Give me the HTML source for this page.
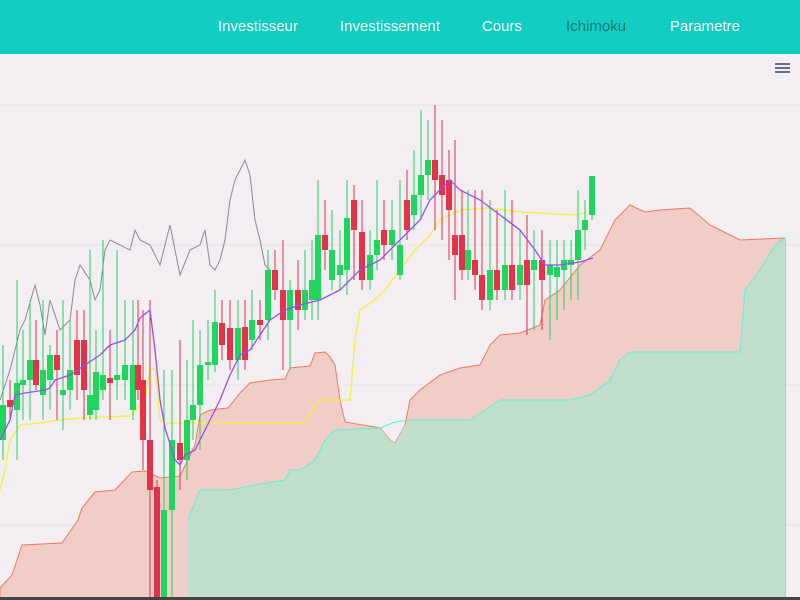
<!DOCTYPE html>
<html><head><meta charset="utf-8"><style>
*{margin:0;padding:0}
body{width:800px;height:600px;overflow:hidden;background:#f2eef2;font-family:"Liberation Sans",sans-serif;position:relative}
.nav{position:absolute;left:0;top:0;width:800px;height:54px;background:#14cdc2}
.nav span{position:absolute;top:18px;font-size:15px;color:#fff;white-space:nowrap;transform:translateX(-50%)}
.ham{position:absolute;left:775px;width:15px;height:2px;background:#6a6f88}
svg{position:absolute;left:0;top:54px}
</style></head><body>
<div class="nav">
<span style="left:258px">Investisseur</span>
<span style="left:390px">Investissement</span>
<span style="left:502px">Cours</span>
<span style="left:596px;color:#0e7a72">Ichimoku</span>
<span style="left:705px">Parametre</span>
</div>
<div class="ham" style="top:63px"></div><div class="ham" style="top:67px"></div><div class="ham" style="top:71px"></div>
<svg width="800" height="546" viewBox="0 54 800 546" id="c">
<g stroke="#e6e2e8" stroke-width="1">
<line x1="0" y1="105" x2="800" y2="105"/><line x1="0" y1="245" x2="800" y2="245"/><line x1="0" y1="385" x2="800" y2="385"/><line x1="0" y1="525" x2="800" y2="525"/>
</g>
<polygon fill="#f0cdc6" stroke="#ef7a5e" stroke-width="1" points="0,600 0,588 12,575 22,545 62,543 78,520 82,508 95,492 115,490 132,472 145,471 160,478 180,476 195,445 200,415 210,410 228,408 240,393 250,383 270,380 285,379 290,368 310,366 315,353 325,352 330,357 335,365 340,400 345,422 380,428 390,440 395,443 405,425 410,400 420,390 440,375 460,368 480,365 490,345 500,335 520,333 540,325 545,300 560,290 580,265 600,250 615,220 630,205 645,212 660,210 690,208 710,225 740,240 785,238 785,600"/>
<polygon fill="#bfdfcb" points="188,600 188,520 200,490 230,490 260,484 285,480 290,470 300,470 315,460 325,440 335,430 380,428 390,440 395,443 405,425 410,420 470,420 500,400 570,400 590,395 610,380 620,360 630,352 740,352 745,290 760,270 775,245 785,238 785,600"/>
<polyline fill="none" stroke="#5ff0d8" stroke-width="1" points="188,520 200,490 230,490 260,484 285,480 290,470 300,470 315,460 325,440 335,430 380,428 395,422 410,420 470,420 500,400 570,400 590,395 610,380 620,360 630,352 740,352 745,290 760,270 775,245 785,238"/>
<polyline fill="none" stroke="#8a8a98" stroke-width="1" points="0,400 10,370 20,330 25,320 35,285 40,305 45,335 50,300 60,330 70,320 75,280 80,265 90,280 95,300 100,290 105,250 110,240 120,245 130,250 135,230 140,240 150,245 160,265 170,225 175,250 180,275 190,250 200,245 205,230 210,265 215,270 220,260 225,240 230,200 235,180 240,170 245,160 250,175 255,220 260,240 265,265 270,270"/>
<polyline fill="none" stroke="#f5f03a" stroke-width="1.3" points="0,490 5,470 10,440 20,425 40,423 60,420 80,418 130,416 145,400 150,370 155,368 160,420 165,423 305,423 315,405 320,400 350,400 355,340 360,310 375,300 385,290 400,270 415,250 430,235 440,220 450,215 460,210 490,208 520,212 575,215 585,213"/>
<g id="cd"></g>
<polyline fill="none" stroke="#9a4cf0" stroke-width="1.3" points="0,440 10,420 15,395 25,393 45,390 50,388 55,380 70,375 100,355 110,345 125,340 135,330 140,318 150,310 155,350 160,400 165,428 175,460 180,465 185,455 195,450 200,440 210,420 220,400 230,375 240,355 250,350 260,335 270,320 285,310 300,305 320,300 340,290 360,270 380,260 400,240 420,220 430,200 440,190 450,180 460,190 480,200 500,215 520,230 535,250 545,265 560,265 580,262 593,258"/>
<rect x="0" y="597" width="800" height="3" fill="#444"/>
</svg>
<script>
var d=[[3,'g',405,440,345,460],[10,'r',400,407,380,420],[17,'g',383,410,280,460],[23,'g',380,385,330,420],[30,'g',360,380,300,420],[36,'r',360,385,320,390],[43,'g',370,395,300,420],[50,'g',355,380,345,410],[57,'r',355,370,330,420],[63,'g',390,395,300,430],[70,'g',370,390,320,410],[77,'r',340,375,310,400],[84,'r',340,390,310,420],[90,'g',395,415,250,420],[96,'g',372,410,330,420],[103,'g',375,390,240,400],[110,'r',378,383,330,420],[117,'g',375,380,250,400],[125,'g',365,380,300,400],[133,'g',365,410,300,420],[138,'r',365,390,300,400],[143,'r',380,440,310,470],[150,'r',440,490,300,600],[157,'r',487,600,480,600],[164,'g',510,600,370,600],[172,'g',440,510,370,600],[180,'r',443,460,340,490],[187,'g',420,460,360,480],[193,'g',405,420,320,440],[200,'g',365,405,330,450],[208,'g',362,365,320,380],[215,'g',322,365,290,372],[222,'r',323,345,300,360],[230,'r',328,360,300,370],[238,'g',328,360,300,380],[245,'r',327,360,300,370],[252,'g',320,340,290,350],[260,'r',320,325,300,340],[268,'g',270,320,250,340],[275,'r',270,290,250,300],[283,'r',290,320,240,370],[290,'g',290,320,280,370],[298,'r',290,310,260,330],[305,'g',290,310,250,320],[312,'g',280,300,240,320],[318,'g',235,300,180,320],[325,'r',235,250,200,270],[332,'g',250,280,210,290],[340,'g',265,275,230,290],[347,'g',218,270,180,295],[354,'r',200,230,185,280],[362,'r',232,280,200,290],[370,'g',255,280,230,290],[377,'g',240,255,180,270],[384,'r',230,245,200,260],[392,'g',230,245,200,260],[400,'g',245,275,180,280],[407,'r',200,230,170,240],[414,'g',195,215,150,230],[421,'g',175,195,110,220],[428,'g',160,175,120,200],[435,'r',160,180,105,230],[442,'r',175,195,120,240],[449,'r',180,210,150,260],[455,'r',235,255,140,300],[462,'r',235,270,190,280],[468,'g',250,270,190,280],[475,'r',260,275,190,290],[482,'r',275,300,190,310],[490,'g',270,300,200,310],[497,'r',270,290,210,300],[505,'g',265,290,190,300],[512,'r',265,290,200,300],[520,'g',265,285,230,300],[527,'r',260,285,215,335],[534,'g',260,270,230,330],[542,'r',260,280,230,330],[550,'g',265,275,240,340],[557,'g',267,277,240,320],[564,'g',260,270,240,310],[571,'g',260,265,240,300],[578,'g',230,260,190,300],[585,'g',220,230,200,250],[592,'g',176,215,176,220]];
var s='';d.forEach(function(c){var col=c[1]=='g'?'#1fd65c':'#e23348';s+='<line x1="'+c[0]+'" x2="'+c[0]+'" y1="'+c[4]+'" y2="'+c[5]+'" stroke="'+col+'" stroke-width="1"/><rect x="'+(c[0]-3)+'" y="'+c[2]+'" width="6" height="'+Math.max(3,c[3]-c[2])+'" fill="'+col+'"/>';});
document.getElementById('cd').innerHTML=s;
</script>
</body></html>
